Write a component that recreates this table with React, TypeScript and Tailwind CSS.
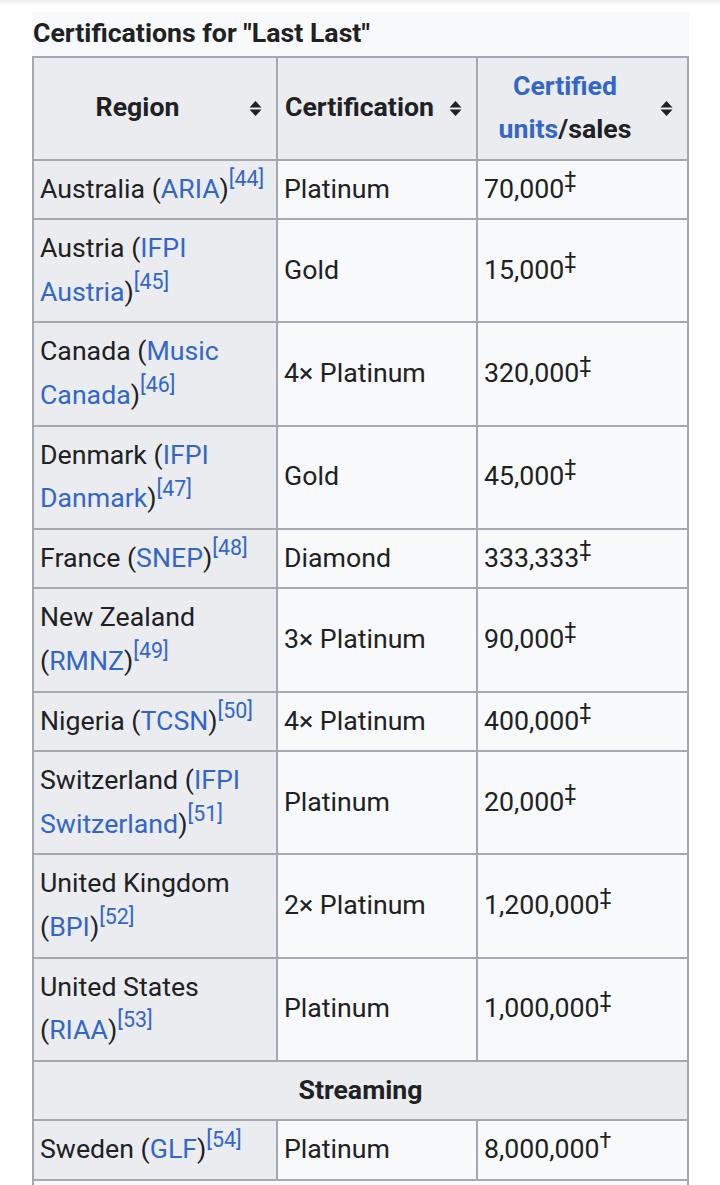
import React from "react";

const L = ({ children }: { children: React.ReactNode }) => (
  <span className="text-[#3366cc]">{children}</span>
);

const Ref = ({ n }: { n: string }) => (
  <sup className="text-[80%] text-[#3366cc] top-[-0.55em]">[{n}]</sup>
);

const Mark = ({ m }: { m: string }) => (
  <sup className="text-[80%] top-[-0.5em]">{m}</sup>
);

const SortIcon = () => (
  <svg width="13" height="17" viewBox="0 0 13 17" className="shrink-0">
    <path d="M6.5 1 L12.5 7.6 L0.5 7.6 Z" fill="#202122" />
    <path d="M0.5 9.4 L12.5 9.4 L6.5 16 Z" fill="#202122" />
  </svg>
);

const SortTh = ({ children }: { children: React.ReactNode }) => (
  <th className="border-2 border-[#a2a9b1] bg-[#eaecf0] pl-[6px] pr-[14px] py-[7px] align-middle font-bold">
    <div className="flex items-center">
      <div className="flex-1 text-center whitespace-nowrap">{children}</div>
      <div className="ml-[14px]">
        <SortIcon />
      </div>
    </div>
  </th>
);

type Row = {
  region: React.ReactNode;
  cert: string;
  units: string;
  mark: string;
};

const rows: Row[] = [
  { region: <>Australia (<L>ARIA</L>)<Ref n="44" /></>, cert: "Platinum", units: "70,000", mark: "‡" },
  { region: <>Austria (<L>IFPI</L><br /><L>Austria</L>)<Ref n="45" /></>, cert: "Gold", units: "15,000", mark: "‡" },
  { region: <>Canada (<L>Music</L><br /><L>Canada</L>)<Ref n="46" /></>, cert: "4× Platinum", units: "320,000", mark: "‡" },
  { region: <>Denmark (<L>IFPI</L><br /><L>Danmark</L>)<Ref n="47" /></>, cert: "Gold", units: "45,000", mark: "‡" },
  { region: <>France (<L>SNEP</L>)<Ref n="48" /></>, cert: "Diamond", units: "333,333", mark: "‡" },
  { region: <>New Zealand<br />(<L>RMNZ</L>)<Ref n="49" /></>, cert: "3× Platinum", units: "90,000", mark: "‡" },
  { region: <>Nigeria (<L>TCSN</L>)<Ref n="50" /></>, cert: "4× Platinum", units: "400,000", mark: "‡" },
  { region: <>Switzerland (<L>IFPI</L><br /><L>Switzerland</L>)<Ref n="51" /></>, cert: "Platinum", units: "20,000", mark: "‡" },
  { region: <>United Kingdom<br />(<L>BPI</L>)<Ref n="52" /></>, cert: "2× Platinum", units: "1,200,000", mark: "‡" },
  { region: <>United States<br />(<L>RIAA</L>)<Ref n="53" /></>, cert: "Platinum", units: "1,000,000", mark: "‡" },
];

const BodyRow = ({ r }: { r: Row }) => (
  <tr>
    <th
      scope="row"
      className="border-2 border-[#a2a9b1] bg-[#eaecf0] px-[6px] py-[7px] text-left font-normal align-middle whitespace-nowrap"
    >
      {r.region}
    </th>
    <td className="border-2 border-[#a2a9b1] px-[6px] py-[7px] align-middle whitespace-nowrap">{r.cert}</td>
    <td className="border-2 border-[#a2a9b1] px-[6px] py-[7px] align-middle whitespace-nowrap">
      {r.units}
      <Mark m={r.mark} />
    </td>
  </tr>
);

export default function App() {
  return (
    <div className="min-h-screen bg-white font-['Roboto','Liberation_Sans',sans-serif] text-[#202122] overflow-hidden">
      <div className="h-[12px] bg-gradient-to-b from-[#efefef] via-white to-white" />
      <table className="ml-[32px] w-[655px] table-fixed border-collapse bg-[#f8f9fa] text-[26.7px] leading-[43.6px]">
        <caption className="bg-[#f8f9fa] pl-[1px] text-left font-bold leading-[43.5px]">Certifications for "Last Last"</caption>
        <colgroup>
          <col className="w-[244px]" />
          <col className="w-[200px]" />
          <col className="w-[211px]" />
        </colgroup>
        <thead>
          <tr>
            <SortTh>Region</SortTh>
            <SortTh>Certification</SortTh>
            <SortTh>
              <L>Certified</L>
              <br />
              <L>units</L>/sales
            </SortTh>
          </tr>
        </thead>
        <tbody>
          {rows.map((r, i) => (
            <BodyRow key={i} r={r} />
          ))}
          <tr>
            <th
              colSpan={3}
              className="border-2 border-[#a2a9b1] bg-[#eaecf0] px-[6px] py-[7px] text-center font-bold align-middle"
            >
              Streaming
            </th>
          </tr>
          <BodyRow r={{ region: <>Sweden (<L>GLF</L>)<Ref n="54" /></>, cert: "Platinum", units: "8,000,000", mark: "†" }} />
          <tr>
            <td colSpan={3} className="h-[60px] border-2 border-[#a2a9b1]" />
          </tr>
        </tbody>
      </table>
    </div>
  );
}
